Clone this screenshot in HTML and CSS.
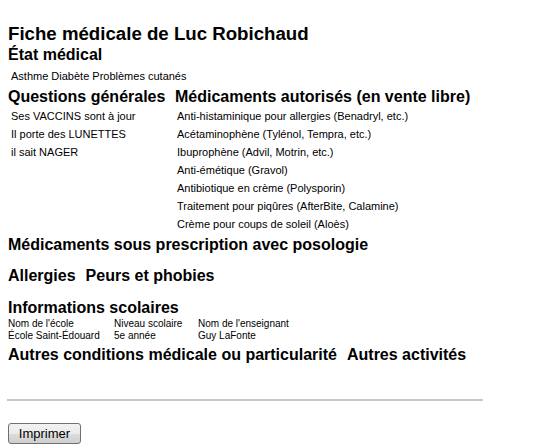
FILE: index.html
```html
<!DOCTYPE html>
<html lang="fr">
<head>
<meta charset="utf-8">
<title>Fiche médicale</title>
<link rel="stylesheet" href="styles.css">
</head>
<body>
<div class="page">
  <h1 class="title">Fiche médicale de Luc Robichaud</h1>
  <h2 class="head etat">État médical</h2>
  <div class="line conds">Asthme Diabète Problèmes cutanés</div>

  <div class="cols">
    <div class="col col-left">
      <h2 class="head">Questions générales</h2>
      <ul class="items">
        <li>Ses VACCINS sont à jour</li>
        <li>Il porte des LUNETTES</li>
        <li>il sait NAGER</li>
      </ul>
    </div>
    <div class="col col-right">
      <h2 class="head">Médicaments autorisés (en vente libre)</h2>
      <ul class="items items-right">
        <li>Anti-histaminique pour allergies (Benadryl, etc.)</li>
        <li>Acétaminophène (Tylénol, Tempra, etc.)</li>
        <li>Ibuprophène (Advil, Motrin, etc.)</li>
        <li>Anti-émétique (Gravol)</li>
        <li>Antibiotique en crème (Polysporin)</li>
        <li>Traitement pour piqûres (AfterBite, Calamine)</li>
        <li>Crème pour coups de soleil (Aloès)</li>
      </ul>
    </div>
  </div>

  <h2 class="head presc">Médicaments sous prescription avec posologie</h2>

  <div class="headrow allergies">
    <h2 class="head">Allergies</h2>
    <h2 class="head">Peurs et phobies</h2>
  </div>

  <h2 class="head scol">Informations scolaires</h2>
  <div class="school">
    <span>Nom de l'école</span><span>Niveau scolaire</span><span>Nom de l'enseignant</span>
    <span>École Saint-Édouard</span><span>5e année</span><span>Guy LaFonte</span>
  </div>

  <div class="headrow autres">
    <h2 class="head">Autres conditions médicale ou particularité</h2>
    <h2 class="head">Autres activités</h2>
  </div>

  <div class="rule"></div>

  <button class="btn" type="button">Imprimer</button>
</div>
</body>
</html>
```

FILE: styles.css
```css
html, body {
  margin: 0;
  padding: 0;
  background: #ffffff;
}

body {
  font-family: "Liberation Sans", Arial, sans-serif;
  color: #000000;
}

.page {
  padding: 0 8px;
}

.title {
  margin: 24px 0 0;
  font-size: 18.67px;
  line-height: 20px;
  font-weight: bold;
}

.head {
  margin: 0;
  font-size: 16px;
  line-height: 19px;
  font-weight: bold;
  white-space: nowrap;
}

.etat {
  margin-top: 1px;
}

.line {
  font-size: 11px;
  line-height: 18px;
}

.conds {
  margin-top: 3px;
  padding-left: 3px;
}

.cols {
  display: flex;
  margin-top: 2px;
}

.col-left {
  width: 167px;
  flex: none;
}

.items {
  list-style: none;
  margin: 1px 0 0;
  padding: 0 0 0 3px;
  font-size: 11px;
  line-height: 18px;
}

.items-right {
  padding-left: 2px;
}

.presc {
  margin-top: 2px;
}

.headrow {
  display: flex;
  gap: 10px;
}

.allergies {
  margin-top: 12px;
}

.scol {
  margin-top: 13px;
}

.school {
  display: grid;
  grid-template-columns: 106px 84px auto;
  margin-top: 1px;
  font-size: 10px;
  line-height: 12px;
}

.autres {
  margin-top: 3px;
}

.rule {
  width: 476px;
  height: 2px;
  margin: 35px 0 0 -1px;
  background: #c8c8c8;
}

.btn {
  display: block;
  margin-top: 22px;
  width: 73px;
  height: 21px;
  padding: 0;
  font-family: "Liberation Sans", Arial, sans-serif;
  font-size: 13px;
  color: #000000;
  border: 1px solid #707070;
  border-radius: 3px;
  background: linear-gradient(to bottom, #f2f2f2 0%, #ebebeb 50%, #dddddd 51%, #cfcfcf 100%);
}
```
